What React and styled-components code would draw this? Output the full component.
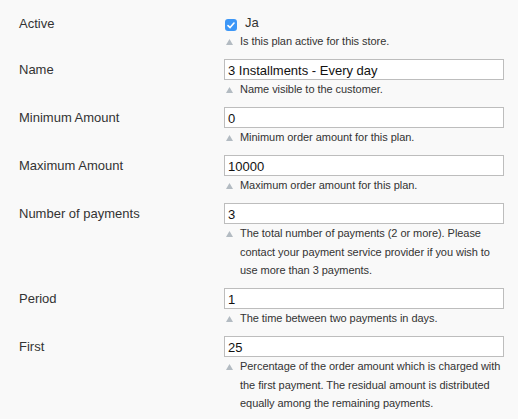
import React from "react";
import styled, { createGlobalStyle } from "styled-components";

const Global = createGlobalStyle`
  html, body { margin: 0; padding: 0; background: #f9f9f9; }
  body { font-family: "Liberation Sans", Arial, Helvetica, sans-serif; color: #333; }
`;

const Form = styled.div`
  padding: 13px 0 0 19px;
  display: flex;
  flex-direction: column;
  gap: 8.5px;
`;

const Row = styled.div`
  display: grid;
  grid-template-columns: 205px 280px;
  align-items: start;
`;

const Label = styled.div`
  font-size: 13px;
  line-height: 21px;
  color: #333;
`;

const Field = styled.div`
  display: flex;
  flex-direction: column;
`;

const Input = styled.input`
  box-sizing: border-box;
  width: 280px;
  height: 21px;
  margin: 0;
  padding: 1px 3px 0;
  border: 1px solid #bdbdbd;
  background: #fff;
  font-family: "Liberation Sans", Arial, Helvetica, sans-serif;
  font-size: 13px;
  color: #111;
  outline: none;
`;

const CheckLine = styled.label`
  display: flex;
  align-items: center;
  height: 19px;
  padding-left: 1px;
  gap: 8px;
  font-size: 13px;
`;

const Box = styled.span`
  display: inline-flex;
  align-items: center;
  justify-content: center;
  width: 12px;
  height: 12px;
  border-radius: 3px;
  background: #3d97f7;
  margin-top: 5px;
`;

const JaText = styled.span`
  margin-top: -1px;
`;

const Help = styled.div`
  display: flex;
  font-size: 11px;
  line-height: 18.5px;
  letter-spacing: -0.05px;
  color: #333;
`;

const HelpIcon = styled.span`
  flex: 0 0 14px;
  display: flex;
  align-items: flex-start;
  padding-top: 6.5px;
  padding-left: 2px;
`;

const HelpText = styled.div`
  flex: 1;
`;

const Triangle = () => (
  <svg width="7" height="6" viewBox="0 0 7 6">
    <polygon points="3.5,0 7,6 0,6" fill="#b3bbc2" />
  </svg>
);

const Hint = ({ children }) => (
  <Help>
    <HelpIcon>
      <Triangle />
    </HelpIcon>
    <HelpText>{children}</HelpText>
  </Help>
);

const rows = [
  { label: "Name", value: "3 Installments - Every day", help: "Name visible to the customer." },
  { label: "Minimum Amount", value: "0", help: "Minimum order amount for this plan." },
  { label: "Maximum Amount", value: "10000", help: "Maximum order amount for this plan." },
  {
    label: "Number of payments",
    value: "3",
    help: "The total number of payments (2 or more). Please contact your payment service provider if you wish to use more than 3 payments.",
  },
  { label: "Period", value: "1", help: "The time between two payments in days." },
  {
    label: "First",
    value: "25",
    help: "Percentage of the order amount which is charged with the first payment. The residual amount is distributed equally among the remaining payments.",
  },
];

export default function App() {
  return (
    <>
      <Global />
      <Form>
        <Row>
          <Label>Active</Label>
          <Field>
            <CheckLine>
              <Box>
                <svg width="8" height="7" viewBox="0 0 8 7">
                  <path d="M1 3.6 L3.1 5.6 L7 1" fill="none" stroke="#fff" strokeWidth="1.6" strokeLinecap="round" strokeLinejoin="round" />
                </svg>
              </Box>
              <JaText>Ja</JaText>
            </CheckLine>
            <Hint>Is this plan active for this store.</Hint>
          </Field>
        </Row>
        {rows.map((r) => (
          <Row key={r.label}>
            <Label>{r.label}</Label>
            <Field>
              <Input defaultValue={r.value} />
              <Hint>{r.help}</Hint>
            </Field>
          </Row>
        ))}
      </Form>
    </>
  );
}
